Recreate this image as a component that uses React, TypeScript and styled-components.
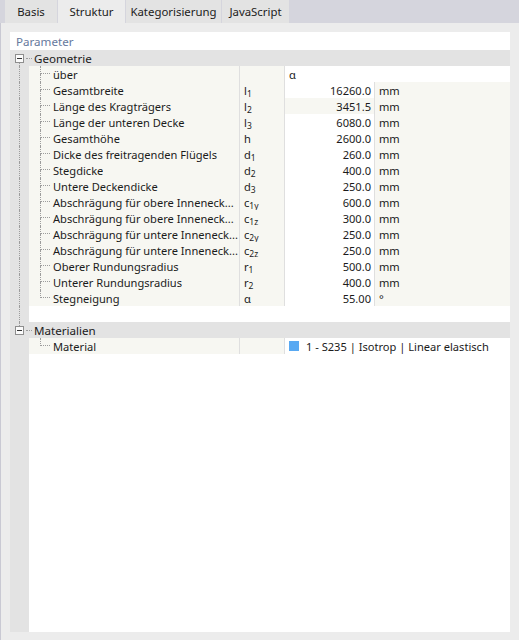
import React from "react";
import styled, { createGlobalStyle } from "styled-components";

const GlobalStyle = createGlobalStyle`
  html, body {
    margin: 0;
    padding: 0;
    background: #ececec;
  }
  body {
    font-family: "Noto Sans", "Open Sans", sans-serif;
    font-size: 11.1px;
    color: #1b1b1b;
  }
`;

const Page = styled.div`
  width: 519px;
  height: 640px;
  display: flex;
  flex-direction: column;
`;

const TabBar = styled.div`
  height: 23px;
  display: flex;
  background: #d5d5dd;
  padding-left: 5px;
  gap: 1px;
`;

const Tab = styled.div<{ active?: boolean; w: number }>`
  width: ${(p) => p.w}px;
  display: flex;
  align-items: center;
  justify-content: center;
  background: ${(p) => (p.active ? "#ececec" : "#e3e3e3")};
  font-size: 11.4px;
  color: #1b1b1b;
`;

const Panel = styled.div`
  flex: 1;
  display: flex;
  background: #ececec;
  border-left: 1px solid #c9c9d3;
  padding: 9px 9px 8px 9px;
`;

const Sheet = styled.div`
  flex: 1;
  display: flex;
  flex-direction: column;
  background: #fff;
`;

const SheetTitle = styled.div`
  height: 18px;
  display: flex;
  align-items: center;
  padding-left: 6px;
  font-size: 11.6px;
  color: #66799d;
`;

const Tree = styled.div`
  flex: 1;
  display: flex;
  flex-direction: column;
  background: linear-gradient(to right, #e3e3e3 19px, #fff 19px);
`;

const GroupRow = styled.div`
  height: 16px;
  display: flex;
  align-items: stretch;
  background: #e3e3e3;
  padding-left: 5px;
`;

const BoxColumn = styled.div`
  width: 9px;
  display: flex;
  flex-direction: column;
`;

const Stub = styled.div<{ on?: boolean; h?: number }>`
  margin-left: 4px;
  height: ${(p) => (p.h ? `${p.h}px` : "auto")};
  flex: ${(p) => (p.h ? "none" : "1")};
  border-left: 1px dotted ${(p) => (p.on ? "#9c9c9c" : "transparent")};
`;

const ToggleBox = styled.div`
  width: 9px;
  height: 9px;
  box-sizing: border-box;
  border: 1px solid #8e8e8e;
  background: #fafafa;
  display: flex;
  align-items: center;
  justify-content: center;

  &::after {
    content: "";
    width: 5px;
    height: 1px;
    background: #333;
  }
`;

const HDots = styled.div`
  width: 6px;
  margin-left: 2px;
  align-self: center;
  border-top: 1px dotted #9c9c9c;
`;

const GroupLabel = styled.div`
  display: flex;
  align-items: center;
  padding-left: 2px;
  font-size: 11.6px;
`;

const Row = styled.div`
  height: 16px;
  display: grid;
  grid-template-columns: 19px 211px 45px 90px 135px;
`;

const Gutter = styled.div<{ line?: boolean }>`
  display: flex;
  & > div {
    margin-left: 9px;
    border-left: 1px dotted ${(p) => (p.line ? "#9c9c9c" : "transparent")};
  }
`;

const Cell = styled.div<{ white?: boolean; span?: number; align?: "left" | "right" }>`
  grid-column: span ${(p) => p.span ?? 1};
  display: flex;
  align-items: center;
  justify-content: ${(p) => (p.align === "right" ? "flex-end" : "flex-start")};
  box-sizing: border-box;
  background: ${(p) => (p.white ? "#fff" : "#f7f7f2")};
  border-right: 1px solid #dfdfdf;
  white-space: nowrap;
  overflow: hidden;
  padding: ${(p) => (p.align === "right" ? "0 3px 0 0" : "0 0 0 4px")};

  &:last-child {
    border-right: none;
  }
`;

const NameCell = styled.div`
  display: flex;
  min-width: 0;
  background: #f7f7f2;
  border-right: 1px solid #dfdfdf;
  white-space: nowrap;
  overflow: hidden;
`;

const Connector = styled.div`
  flex: none;
  margin-left: 11px;
  width: 10px;
  display: flex;
  flex-direction: column;
`;

const ConnTop = styled.div`
  height: 7px;
  border-left: 1px dotted #9c9c9c;
  border-bottom: 1px dotted #9c9c9c;
`;

const ConnBottom = styled.div<{ last?: boolean }>`
  flex: 1;
  border-left: 1px dotted ${(p) => (p.last ? "transparent" : "#9c9c9c")};
`;

const NameText = styled.div`
  display: flex;
  align-items: center;
  padding-left: 3px;
  min-width: 0;
  overflow: hidden;
`;

const Sym = styled.span`
  sub {
    font-size: 8.5px;
    vertical-align: -2px;
    line-height: 0;
  }
`;

const Swatch = styled.span`
  flex: none;
  width: 10px;
  height: 10px;
  background: #59a9f2;
  margin-right: 7px;
`;

const Spacer = styled.div`
  height: 16px;
  display: flex;
`;

type Param = {
  name: string;
  sym?: [string, string?];
  value?: string;
  unit?: string;
  merged?: React.ReactNode;
  hl?: boolean;
};

const geometry: Param[] = [
  { name: "über", merged: "α" },
  { name: "Gesamtbreite", sym: ["l", "1"], value: "16260.0", unit: "mm" },
  { name: "Länge des Kragträgers", sym: ["l", "2"], value: "3451.5", unit: "mm", hl: true },
  { name: "Länge der unteren Decke", sym: ["l", "3"], value: "6080.0", unit: "mm" },
  { name: "Gesamthöhe", sym: ["h"], value: "2600.0", unit: "mm" },
  { name: "Dicke des freitragenden Flügels", sym: ["d", "1"], value: "260.0", unit: "mm" },
  { name: "Stegdicke", sym: ["d", "2"], value: "400.0", unit: "mm" },
  { name: "Untere Deckendicke", sym: ["d", "3"], value: "250.0", unit: "mm" },
  { name: "Abschrägung für obere Inneneck...", sym: ["c", "1y"], value: "600.0", unit: "mm" },
  { name: "Abschrägung für obere Inneneck...", sym: ["c", "1z"], value: "300.0", unit: "mm" },
  { name: "Abschrägung für untere Inneneck...", sym: ["c", "2y"], value: "250.0", unit: "mm" },
  { name: "Abschrägung für untere Inneneck...", sym: ["c", "2z"], value: "250.0", unit: "mm" },
  { name: "Oberer Rundungsradius", sym: ["r", "1"], value: "500.0", unit: "mm" },
  { name: "Unterer Rundungsradius", sym: ["r", "2"], value: "400.0", unit: "mm" },
  { name: "Stegneigung", sym: ["α"], value: "55.00", unit: "°" },
];

const materials: Param[] = [
  {
    name: "Material",
    merged: (
      <>
        <Swatch />1 - S235 | Isotrop | Linear elastisch
      </>
    ),
  },
];

function Group({
  label,
  items,
  hasPrev,
  hasNext,
}: {
  label: string;
  items: Param[];
  hasPrev?: boolean;
  hasNext?: boolean;
}) {
  return (
    <>
      <GroupRow>
        <BoxColumn>
          <Stub h={4} on={hasPrev} />
          <ToggleBox />
          <Stub on={hasNext} />
        </BoxColumn>
        <HDots />
        <GroupLabel>{label}</GroupLabel>
      </GroupRow>
      {items.map((it, i) => (
        <Row key={i}>
          <Gutter line={hasNext}>
            <div />
          </Gutter>
          <NameCell>
            <Connector>
              <ConnTop />
              <ConnBottom last={i === items.length - 1} />
            </Connector>
            <NameText>{it.name}</NameText>
          </NameCell>
          <Cell>
            {it.sym && (
              <Sym>
                {it.sym[0]}
                {it.sym[1] && <sub>{it.sym[1]}</sub>}
              </Sym>
            )}
          </Cell>
          {it.merged !== undefined ? (
            <Cell white span={2}>
              {it.merged}
            </Cell>
          ) : (
            <>
              <Cell white={!it.hl} align="right">
                {it.value}
              </Cell>
              <Cell>{it.unit}</Cell>
            </>
          )}
        </Row>
      ))}
    </>
  );
}

export default function App() {
  return (
    <Page>
      <GlobalStyle />
      <TabBar>
        <Tab w={52}>Basis</Tab>
        <Tab w={67} active>
          Struktur
        </Tab>
        <Tab w={95}>Kategorisierung</Tab>
        <Tab w={67}>JavaScript</Tab>
      </TabBar>
      <Panel>
        <Sheet>
          <SheetTitle>Parameter</SheetTitle>
          <Tree>
            <Group label="Geometrie" items={geometry} hasNext />
            <Spacer>
              <Gutter line>
                <div />
              </Gutter>
            </Spacer>
            <Group label="Materialien" items={materials} hasPrev />
          </Tree>
        </Sheet>
      </Panel>
    </Page>
  );
}
